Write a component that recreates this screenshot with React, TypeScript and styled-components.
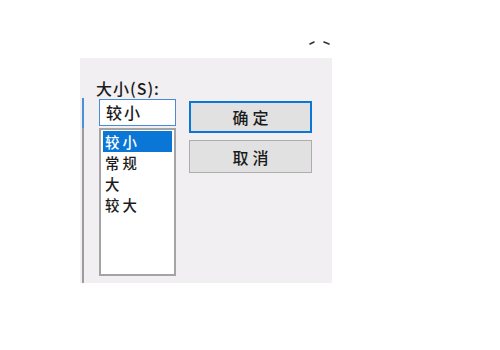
import styled, {createGlobalStyle} from "styled-components";

const GlobalStyle = createGlobalStyle`
    html, body {
        margin: 0;
        padding: 0;
        background: #fff;
    }
    body {
        font-family: "Noto Sans CJK SC", "Noto Sans", sans-serif;
        color: #1b1b1b;
    }
`

const sizes = ['较小', '常规', '大', '较大'];

export default function App() {
    const selected = '较小';

    return <>
        <GlobalStyle/>
        <Page>
            <Marks>
                <svg width="22" height="6" viewBox="0 0 22 6">
                    <path d="M1 4 L5 2" stroke="#333" strokeWidth="1.6" strokeLinecap="round"/>
                    <path d="M15 2 L20 4" stroke="#333" strokeWidth="1.6" strokeLinecap="round"/>
                </svg>
            </Marks>
            <Panel>
                <Edge>
                    <EdgeFocus/>
                    <EdgeLine/>
                </Edge>
                <Content>
                    <Label>大小(S):</Label>
                    <Row>
                        <Picker>
                            <SizeInput>{selected}</SizeInput>
                            <SizeList>
                                {sizes.map(s => <SizeItem key={s} $active={s === selected}>{s}</SizeItem>)}
                            </SizeList>
                        </Picker>
                        <Buttons>
                            <Button $primary>确定</Button>
                            <Button>取消</Button>
                        </Buttons>
                    </Row>
                </Content>
            </Panel>
        </Page>
    </>
}

const Page = styled.div`
    padding: 38px 0 0 80px;
`

const Marks = styled.div`
    width: 252px;
    height: 20px;
    display: flex;
    justify-content: flex-end;
    align-items: flex-start;

    svg {
        margin-right: 1px;
        margin-top: 2px;
    }
`

const Panel = styled.section`
    width: 252px;
    height: 225px;
    background: #f1eff2;
    display: flex;
`

const Edge = styled.div`
    margin: 40px 0 0 2px;
    width: 2px;
    display: flex;
    flex-direction: column;
`

const EdgeFocus = styled.div`
    height: 30px;
    background: #4a8fd8;
`

const EdgeLine = styled.div`
    flex: 1;
    background: #9c9c9e;
`

const Content = styled.div`
    margin-left: 15px;
    padding-top: 20px;
    display: flex;
    flex-direction: column;
`

const Label = styled.div`
    height: 20px;
    line-height: 20px;
    font-size: 16px;
    font-weight: 500;
    letter-spacing: 1px;
    margin-left: -3px;
    margin-bottom: 1px;
`

const Row = styled.div`
    display: flex;
    gap: 13px;
`

const Picker = styled.div`
    display: flex;
    flex-direction: column;
    gap: 2px;
    width: 77px;
`

const SizeInput = styled.div`
    height: 27px;
    box-sizing: border-box;
    border: 1px solid #4c8bd2;
    background: #fff;
    font-size: 16px;
    font-weight: 500;
    line-height: 25px;
    letter-spacing: 2px;
    padding-left: 6px;
`

const SizeList = styled.ul`
    margin: 0;
    padding: 1px 2px;
    list-style: none;
    height: 148px;
    box-sizing: border-box;
    border: 2px solid #a4a4a6;
    background: #fff;
`

const SizeItem = styled.li<{ $active?: boolean }>`
    height: 21px;
    line-height: 21px;
    font-size: 14.4px;
    font-weight: 500;
    letter-spacing: 3px;
    padding-left: 2px;
    background: ${p => p.$active ? '#0a77d6' : 'transparent'};
    color: ${p => p.$active ? '#fff' : '#1b1b1b'};
`

const Buttons = styled.div`
    margin-top: 2px;
    display: flex;
    flex-direction: column;
    gap: 7px;
`

const Button = styled.button<{ $primary?: boolean }>`
    width: 123px;
    height: ${p => p.$primary ? '32px' : '33px'};
    box-sizing: border-box;
    background: #e1e1e1;
    border: ${p => p.$primary ? '2px solid #0a77d6' : '1px solid #adadad'};
    border-radius: 0;
    font-family: "Noto Sans CJK SC", "Noto Sans", sans-serif;
    font-size: 16px;
    font-weight: 500;
    letter-spacing: 4px;
    padding: 0 0 0 4px;
    color: #1b1b1b;
`
